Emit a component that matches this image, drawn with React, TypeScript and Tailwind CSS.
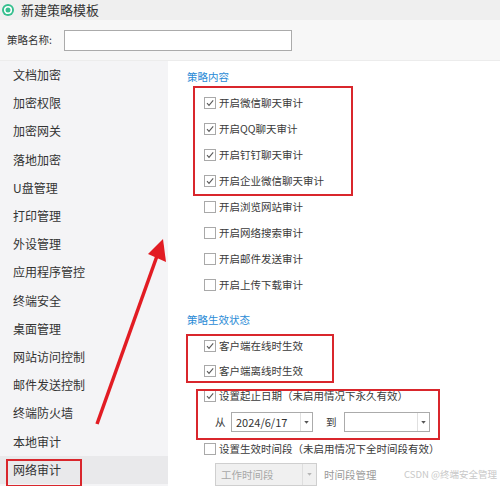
import React from 'react';

const font = { fontFamily: '"Microsoft YaHei", "Noto Sans CJK SC", "Noto Sans", sans-serif' };

const menu = [
  '文档加密',
  '加密权限',
  '加密网关',
  '落地加密',
  'U盘管理',
  '打印管理',
  '外设管理',
  '应用程序管控',
  '终端安全',
  '桌面管理',
  '网站访问控制',
  '邮件发送控制',
  '终端防火墙',
  '本地审计',
  '网络审计',
];

const Check = ({ on }: { on: boolean }) => (
  <span className="w-[12px] h-[12px] border border-[#a9a9a9] bg-white flex items-center justify-center shrink-0">
    {on && (
      <svg width="10" height="10" viewBox="0 0 10 10">
        <polyline points="2,5.2 4,7.4 8.2,2.4" fill="none" stroke="#5a5a5a" strokeWidth="1.1" />
      </svg>
    )}
  </span>
);

const Row = ({ on, label, h = 'h-[26px]' }: { on: boolean; label: string; h?: string }) => (
  <div className={`${h} flex items-center gap-[3px] pl-[36px] text-[10.5px] text-[#3a3a3a]`}>
    <Check on={on} />
    <span>{label}</span>
  </div>
);

const Select = ({ value, w }: { value: string; w: string }) => (
  <div className={`${w} h-[20px] border border-[#ababab] bg-white flex items-center`}>
    <span className="flex-1 pl-[4px] text-[11px] text-[#333]">{value}</span>
    <span className="w-[12px] h-full border-l border-[#e0e0e0] flex items-center justify-center">
      <svg width="5" height="3" viewBox="0 0 6 4">
        <polygon points="0,0 6,0 3,3.5" fill="#555" />
      </svg>
    </span>
  </div>
);

export default function App() {
  return (
    <div className="relative w-[500px] h-[486px] overflow-hidden bg-white" style={font}>
      {/* title */}
      <div className="h-[20px] bg-[#efefef] flex items-center pl-[2px] gap-[7px]">
        <svg width="12" height="12" viewBox="0 0 12 12">
          <circle cx="6" cy="6" r="6" fill="#35bf8e" />
          <circle cx="6" cy="6" r="3.3" fill="none" stroke="#fff" strokeWidth="1.6" />
          <circle cx="6" cy="6" r="1.1" fill="#35bf8e" />
        </svg>
        <span className="text-[13px] text-[#333]">新建策略模板</span>
      </div>

      {/* name row */}
      <div className="h-[41px] bg-[#f7f7f7] flex items-center border-b border-[#ececec]">
        <span className="w-[64px] pl-[7px] text-[10.5px] text-[#333]">策略名称:</span>
        <div className="w-[228px] h-[21px] border border-[#ababab] bg-white" />
      </div>

      <div className="flex h-[425px]">
        {/* sidebar */}
        <div className="w-[168px] bg-[#f4f4f6] flex flex-col">
          {menu.map((m, i) => (
            <div
              key={m}
              className={`h-[28.2px] shrink-0 flex items-center pl-[13px] text-[12px] text-[#333] ${
                i === menu.length - 1 ? 'bg-[#e9e9eb]' : ''
              }`}
            >
              {m}
            </div>
          ))}
        </div>

        {/* splitter */}
        <div className="w-[8px] bg-white flex flex-col items-center pt-[266px] gap-[2px]">
          {[0, 1, 2, 3].map((d) => (
            <span key={d} className="w-[1px] h-[1.5px] bg-[#666]" />
          ))}
        </div>

        {/* content */}
        <div className="flex-1 bg-white flex flex-col pt-[8px] -ml-[8px]">
          <div className="h-[16px] pl-[19px] text-[10.5px] text-[#2a8bd6] flex items-center">策略内容</div>
          <div className="mt-[5px] flex flex-col">
            <Row on label="开启微信聊天审计" />
            <Row on label="开启QQ聊天审计" />
            <Row on label="开启钉钉聊天审计" />
            <Row on label="开启企业微信聊天审计" />
            <Row on={false} label="开启浏览网站审计" />
            <Row on={false} label="开启网络搜索审计" />
            <Row on={false} label="开启邮件发送审计" />
            <Row on={false} label="开启上传下载审计" />
          </div>

          <div className="mt-[14px] h-[16px] pl-[19px] text-[10.5px] text-[#2a8bd6] flex items-center">策略生效状态</div>
          <div className="mt-[5px] flex flex-col">
            <Row on h="h-[25px]" label="客户端在线时生效" />
            <Row on h="h-[25px]" label="客户端离线时生效" />
            <Row on h="h-[25px]" label="设置起止日期（未启用情况下永久有效）" />
          </div>
          <div className="h-[28px] flex items-center pl-[47px] text-[10.5px] text-[#3a3a3a]">
            <span className="w-[16px]">从</span>
            <Select value="2024/6/17" w="w-[82px]" />
            <span className="ml-[13px] w-[18px]">到</span>
            <Select value="" w="w-[86px]" />
          </div>
          <div>
            <Row on={false} label="设置生效时间段（未启用情况下全时间段有效）" />
          </div>
          <div className="h-[23px] flex items-center pl-[47px] mt-[1px]">
            <div className="w-[102px] h-[23px] border border-[#cfcfcf] bg-[#f0f0f0] flex items-center">
              <span className="flex-1 pl-[5px] text-[10.5px] text-[#a8a8a8]">工作时间段</span>
              <span className="w-[14px] h-full border-l border-[#dedede] flex items-center justify-center">
                <svg width="5" height="3" viewBox="0 0 6 4">
                  <polygon points="0,0 6,0 3,3.5" fill="#b5b5b5" />
                </svg>
              </span>
            </div>
            <span className="ml-[7px] text-[10.5px] text-[#9a9a9a]">时间段管理</span>
            <span className="ml-auto mr-[3px] text-[9.5px] text-[#c8c8c8]">CSDN @终端安全管理</span>
          </div>
        </div>
      </div>

      {/* annotation boxes */}
      <div className="absolute left-[193px] top-[86px] w-[160px] h-[110px] border-2 border-[#d9262c]" />
      <div className="absolute left-[186px] top-[334px] w-[148px] h-[49px] border-2 border-[#d9262c]" />
      <div className="absolute left-[196px] top-[389px] w-[244px] h-[51px] border-2 border-[#d9262c]" />
      <div className="absolute left-[6px] top-[459px] w-[76px] h-[28px] border-2 border-[#d9262c]" />

      {/* arrow */}
      <svg className="absolute left-0 top-0 pointer-events-none" width="500" height="486">
        <line x1="97" y1="424" x2="157" y2="256" stroke="#e21c23" strokeWidth="3.5" />
        <polygon points="163,239 166,262 148,254" fill="#e21c23" />
      </svg>
    </div>
  );
}
